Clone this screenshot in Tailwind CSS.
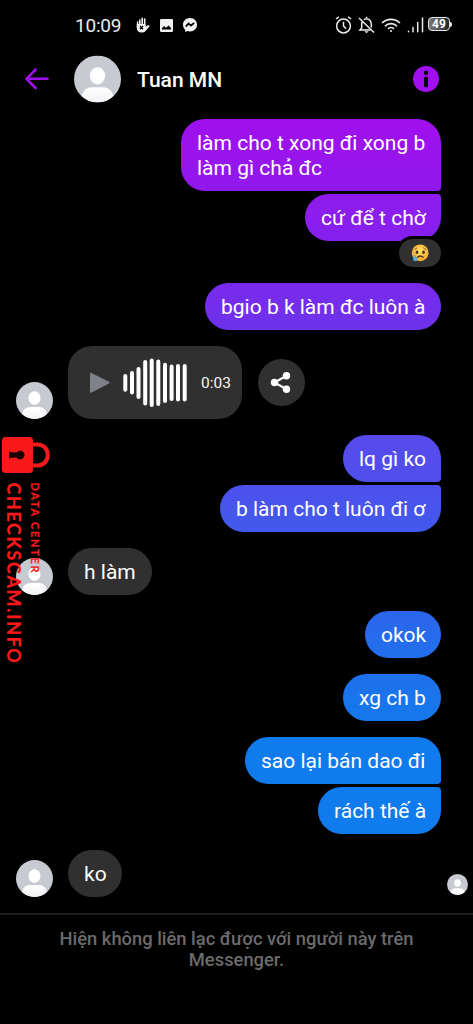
<!DOCTYPE html>
<html lang="vi">
<head>
<meta charset="utf-8">
<meta name="viewport" content="width=device-width">
<title>Messenger</title>
<script src="https://cdn.jsdelivr.net/npm/@tailwindcss/browser@4"></script>
</head>
<body class="bg-black">
<svg width="0" height="0" class="absolute">
  <defs>
    <linearGradient id="body" x1="0" y1="0" x2="0" y2="1"><stop offset="0" stop-color="#fff"/><stop offset="1" stop-color="#f1f2f5"/></linearGradient>
    <clipPath id="round"><circle cx="24" cy="24" r="24"/></clipPath>
    <symbol id="avatar" viewBox="0 0 48 48">
      <g clip-path="url(#round)">
        <rect width="48" height="48" fill="#c8cad1"/>
        <ellipse cx="24" cy="20.8" rx="7.8" ry="8.7" fill="#fff"/>
        <path d="M7 44C8.500 36 13 32.500 18 32.500H30C35 32.500 39.500 36 41 44V48H7Z" fill="url(#body)"/>
      </g>
    </symbol>
  </defs>
</svg>
<div class="relative flex h-[1024px] w-[473px] flex-col overflow-hidden bg-black font-['Roboto','Noto_Sans',sans-serif] text-white">

  <!-- Status bar -->
  <div class="flex h-[50px] shrink-0 items-center pl-[75px]">
    <span class="w-[61px] whitespace-nowrap text-[19px] leading-none tracking-[-0.2px] text-[#ececec]">10:09</span>
    <svg class="h-[16px] w-[14px]" viewBox="0 0 14 16" fill="none">
      <path d="M3.800 3V9M6.200 1.400V8M8.700 2V8" stroke="#f2f2f2" stroke-width="1.600" stroke-linecap="round"/>
      <path d="M1.600 5V10.500" stroke="#f2f2f2" stroke-width="1.500" stroke-linecap="round"/>
      <path d="M.8 7H9.500V9.600L11.900 8.300C13.300 7.900 14 8.900 13.300 9.700L9.300 14.200C8.300 15.300 7 15.600 5.500 15.600C2.500 15.600.8 13.800.8 11Z" fill="#f2f2f2"/>
      <path d="M3.900 9L7 12.200M7 9L3.900 12.200" stroke="#000" stroke-width="1.300"/>
    </svg>
    <svg class="ml-[10px] h-[13px] w-[13px]" viewBox="0 0 13 13"><rect width="13" height="13" rx="1.300" fill="#f2f2f2"/><path d="M2 10.500V8.900L4.200 7L6 8.700L8.600 6.400L11 9V10.500Z" fill="#000"/></svg>
    <svg class="ml-[10px] h-[14px] w-[14px]" viewBox="0 0 14 14"><path d="M7 0C3 0 0 2.900 0 6.700C0 8.800.8 10.500 2.200 11.700V14L4.400 13C5.200 13.300 6.100 13.400 7 13.400C11 13.400 14 10.500 14 6.700C14 2.900 11 0 7 0Z" fill="#f2f2f2"/><path d="M2.800 8.600L5.500 5.400L8 7.700L11.200 4.800" fill="none" stroke="#000" stroke-width="1.700"/></svg>
    <svg class="ml-[138px] h-[18px] w-[17px]" viewBox="0 0 17 18" fill="none" stroke="#ececec" stroke-width="1.500"><circle cx="8.500" cy="10" r="6.900"/><path d="M8.500 5.800V10L11 12.700M1 3L3.800 .9M16 3L13.200 .9"/></svg>
    <svg class="ml-[6px] h-[18px] w-[17px]" viewBox="0 0 17 18" fill="none" stroke="#ececec" stroke-width="1.500"><path d="M4.200 6C3.800 6.600 3.700 7.300 3.700 8V12L2 13.900H12.500M5.800 3.700C7.200 2.600 9.800 2.600 11.200 3.700C12.600 4.800 13.300 6 13.300 8V11.500M8.500 .8V3M1 2L16 16.500"/><path d="M6.300 15.300H10.700L8.500 17.200Z" fill="#ececec" stroke="none"/></svg>
    <svg class="ml-[6px] h-[14px] w-[20px]" viewBox="0 0 20 14" fill="none" stroke="#ececec" stroke-width="1.600"><path d="M1 5C6 .1 14 .1 19 5M4 8.100C7.300 4.800 12.700 4.800 16 8.100M7 10.900C8.700 9.200 11.300 9.200 13 10.900"/><circle cx="10" cy="13" r="1" fill="#ececec" stroke="none"/></svg>
    <svg class="ml-[6px] h-[16px] w-[17px]" viewBox="0 0 17 16" fill="none" stroke="#ececec" stroke-width="1.500" stroke-linecap="round"><path d="M1.500 14.300V14.800M6 10.500V14.800M10.700 5.500V14.800M15.500 1V14.800"/></svg>
    <div class="-mt-[2px] ml-[4px] flex h-[14px] w-[22px] shrink-0 items-center justify-center rounded-[4px] border border-[#e5e5e5] bg-gradient-to-r from-[#777] via-[#555] to-[#222] text-[12px] leading-none font-bold">49</div>
    <div class="-mt-[2px] h-[5px] w-[2px] shrink-0 rounded-r bg-[#e5e5e5]"></div>
  </div>

  <!-- Conversation header -->
  <div class="flex h-[69px] shrink-0 items-start pt-[5px]">
    <svg class="mt-[13px] ml-[25px] h-[22px] w-[24px]" viewBox="0 0 24 22" fill="none" stroke="#a10ef0" stroke-width="2.600" stroke-linecap="round" stroke-linejoin="round"><path d="M10.500 1.700L1.500 10.800L10.500 20M1.500 10.800H22.500"/></svg>
    <svg class="ml-[25px] h-[48px] w-[47px]"><use href="#avatar"/></svg>
    <span class="ml-[16px] w-[260px] text-[21px] leading-[50px] font-medium">Tuan MN</span>
    <svg class="mt-[11px] ml-[16px] h-[26px] w-[26px]" viewBox="0 0 26 26"><circle cx="13" cy="13" r="13" fill="#a10ef0"/><circle cx="13" cy="6.700" r="2.200" fill="#000"/><rect x="11" y="10.700" width="4" height="10.600" rx="1.200" fill="#000"/></svg>
  </div>

  <!-- Messages -->
  <div class="flex h-[794px] shrink-0 flex-col pr-8 pl-4 text-[21px] leading-[25px]">
    <div class="h-[72px] w-[260px] self-end rounded-[24px] rounded-br-[4px] bg-gradient-to-b from-[#a10eee] to-[#9019ed] pt-[12px] pl-[16px] whitespace-nowrap">làm cho t xong đi xong b<br>làm gì chả đc</div>
    <div class="relative mt-[3px] h-[47px] w-[136px] self-end rounded-[24px] rounded-tr-[4px] bg-gradient-to-b from-[#901aed] to-[#8420ed] pt-[12px] pl-[16px] whitespace-nowrap">cứ để t chờ
      <div class="absolute top-[42px] -right-[3px] flex h-[34px] w-[48px] items-center justify-center rounded-full border-[3px] border-black bg-[#303030]">
        <svg class="h-[18px] w-[18px]" viewBox="0 0 18 18" fill="none">
          <defs><radialGradient id="sad" cx=".5" cy=".4" r=".6"><stop offset="0" stop-color="#ffe36a"/><stop offset="1" stop-color="#f3a62b"/></radialGradient></defs>
          <circle cx="9.200" cy="8.800" r="8.400" fill="url(#sad)"/>
          <path d="M3.400 5.400Q5.200 5 6.300 3.600M12.200 3.600Q13.300 5 15.100 5.400" stroke="#8b5a16"/>
          <ellipse cx="6" cy="8.300" rx="1.300" ry="1.700" fill="#46301a"/><ellipse cx="12.500" cy="8.300" rx="1.300" ry="1.700" fill="#46301a"/>
          <path d="M6.600 13.300Q9.300 10.700 12 13.300" stroke="#46301a" stroke-width="1.400" stroke-linecap="round"/>
          <path d="M4.200 10.500C3 12.700 2.200 13.800 2.200 15.200A2 2 0 0 0 6.200 15.200C6.200 13.800 5.300 12.700 4.200 10.500Z" fill="#43b5ef"/>
        </svg>
      </div>
    </div>
    <div class="mt-[42px] h-[47px] w-[236px] self-end rounded-full bg-gradient-to-b from-[#7a29ec] to-[#6c32ec] pt-[12px] pl-[16px] whitespace-nowrap">bgio b k làm đc luôn à</div>

    <div class="mt-[16.4px] flex h-[73px] items-center">
      <svg class="h-[37px] w-[37px] self-end"><use href="#avatar"/></svg>
      <div class="ml-[15px] flex h-[73px] w-[174px] items-center rounded-[24px] bg-[#303030]">
        <svg class="h-[73px] w-[125px]" viewBox="0 0 125 73" fill="none">
          <path d="M23 27.800L40.500 36.700L23 45.700Z" fill="#7f8188" stroke="#7f8188" stroke-width="2" stroke-linejoin="round"/>
          <path d="M57.300 29.900V43.700M64 27V46.400M70.500 23V51M77.200 16V57.500M83.700 14.500V59M90.300 15.500V58M97 18.700V55M103.600 20.500V53M110 20V53.500M116.700 20V53.500" stroke="#fff" stroke-width="4" stroke-linecap="round"/>
        </svg>
        <span class="mt-[1px] ml-[8px] text-[15.500px] leading-none text-[#f5f5f5]">0:03</span>
      </div>
      <svg class="ml-[15.500px] h-[47px] w-[47px]" viewBox="0 0 47 47"><circle cx="23.500" cy="23.500" r="23.500" fill="#303030"/><path d="M28.500 16.800L16.500 23.500L28.500 30.300" fill="none" stroke="#fff" stroke-width="2.200"/><g fill="#fff"><circle cx="28.500" cy="16.800" r="3.700"/><circle cx="16.500" cy="23.500" r="3.700"/><circle cx="28.500" cy="30.300" r="3.700"/></g></svg>
    </div>

    <div class="mt-4 h-[47px] w-[98px] self-end rounded-[24px] rounded-br-[4px] bg-gradient-to-b from-[#574aec] to-[#4f4fec] pt-[12px] pl-[16px] whitespace-nowrap">lq gì ko</div>
    <div class="mt-[3px] h-[47px] w-[221px] self-end rounded-[24px] rounded-tr-[4px] bg-gradient-to-b from-[#4d50ec] to-[#405aec] pt-[12px] pl-[16px] whitespace-nowrap">b làm cho t luôn đi ơ</div>

    <div class="mt-4 flex h-[47px] items-end">
      <svg class="h-[37px] w-[37px]"><use href="#avatar"/></svg>
      <div class="ml-[15px] h-[47px] w-[84px] rounded-full bg-[#303030] pt-[12px] pl-[16px] whitespace-nowrap">h làm</div>
    </div>

    <div class="mt-4 h-[47px] w-[76px] self-end rounded-full bg-gradient-to-b from-[#2b66ec] to-[#216fec] pt-[12px] pl-[16px] whitespace-nowrap">okok</div>
    <div class="mt-4 h-[47px] w-[98px] self-end rounded-full bg-gradient-to-b from-[#1e71ec] to-[#1478ed] pt-[12px] pl-[16px] whitespace-nowrap">xg ch b</div>
    <div class="mt-4 h-[47px] w-[196px] self-end rounded-[24px] rounded-br-[4px] bg-[#107bed] pt-[12px] pl-[16px] whitespace-nowrap">sao lại bán dao đi</div>
    <div class="mt-[3px] h-[47px] w-[123px] self-end rounded-[24px] rounded-tr-[4px] bg-[#107bed] pt-[12px] pl-[16px] whitespace-nowrap">rách thế à</div>

    <div class="mt-4 -mr-[27px] flex h-[47px] items-end">
      <svg class="h-[37px] w-[37px]"><use href="#avatar"/></svg>
      <div class="ml-[15px] h-[47px] w-[54px] rounded-full bg-[#303030] pt-[12px] pl-[16px] whitespace-nowrap">ko</div>
      <svg class="mb-[2px] ml-auto h-[21px] w-[21px]"><use href="#avatar"/></svg>
    </div>
  </div>

  <!-- Footer notice -->
  <div class="border-t-2 border-[#1d1d1d] pt-[13px] text-center text-[18.350px] leading-[21px] font-medium whitespace-nowrap text-[#6b6b6b]">Hiện không liên lạc được với người này trên<br>Messenger.</div>

  <!-- Watermark -->
  <svg class="absolute top-[430px] left-0 h-[240px] w-[56px]" viewBox="0 0 56 240" fill="#f9191b">
    <path d="M32 14.500H37.500C43.500 14.500 47.800 19 47.800 25C47.800 31 43.500 35.500 37.500 35.500H32" fill="none" stroke="#f9191b" stroke-width="4"/>
    <rect x="2" y="7" width="31" height="36" rx="3.500"/>
    <path d="M9.200 21.200L11 22.200L16.500 22.600A4.400 4.400 0 1 1 16.500 27.400L11 27.800L9.200 28.800Z" fill="#1a0202"/>
    <text transform="translate(7 52.500) rotate(90) scale(.92 1)" textLength="196" lengthAdjust="spacing" font-family="Lato" font-weight="900" font-size="19.500">CHECKSCAM.INFO</text>
    <text transform="translate(31.300 52.500) rotate(90) scale(.92 1)" textLength="98" lengthAdjust="spacing" font-family="Lato" font-weight="700" font-size="12" stroke="#f9191b" stroke-width=".2">DATA CENTER</text>
  </svg>
</div>
</body>
</html>
